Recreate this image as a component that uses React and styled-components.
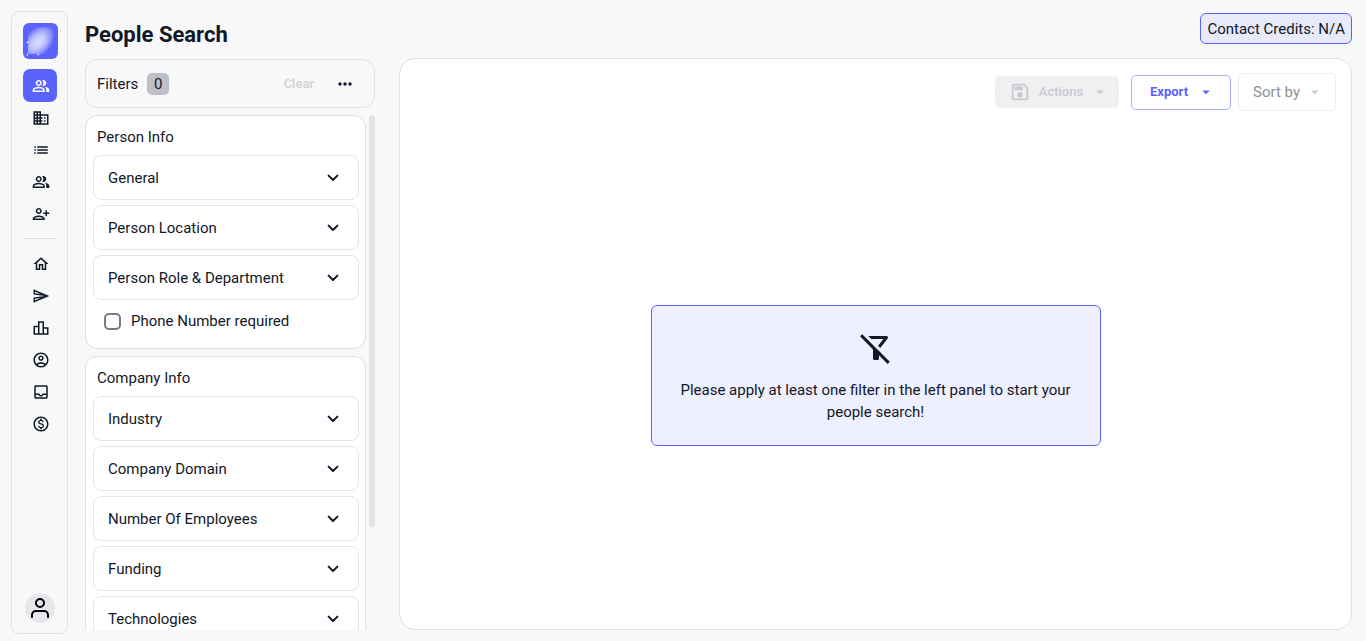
import React, { useState } from "react";
import styled, { createGlobalStyle, ThemeProvider } from "styled-components";
import {
  MdOutlinePeopleAlt,
  MdOutlineBusiness,
  MdList,
  MdOutlinePersonAddAlt1,
  MdOutlineHome,
  MdOutlineSend,
  MdOutlineLeaderboard,
  MdOutlineAccountCircle,
  MdOutlineInbox,
  MdOutlineMonetizationOn,
  MdOutlineSave,
  MdArrowDropDown,
  MdMoreHoriz,
  MdOutlineFilterAltOff,
} from "react-icons/md";
import { FiUser } from "react-icons/fi";

const theme = {
  primary: "#5b63ff",
  text: "#111827",
  page: "#f8f8f8",
  border: "#e0e0e2",
};

const mainLinks = [
  { label: "People", icon: MdOutlinePeopleAlt, active: true },
  { label: "Companies", icon: MdOutlineBusiness },
  { label: "Lists", icon: MdList },
  { label: "Contacts", icon: MdOutlinePeopleAlt },
  { label: "Add person", icon: MdOutlinePersonAddAlt1 },
];

const moreLinks = [
  { label: "Home", icon: MdOutlineHome },
  { label: "Campaigns", icon: MdOutlineSend },
  { label: "Analytics", icon: MdOutlineLeaderboard },
  { label: "Account", icon: MdOutlineAccountCircle },
  { label: "Inbox", icon: MdOutlineInbox },
  { label: "Billing", icon: MdOutlineMonetizationOn },
];

const personFilters = ["General", "Person Location", "Person Role & Department"];
const companyFilters = ["Industry", "Company Domain", "Number Of Employees", "Funding", "Technologies"];

const Chevron = () => (
  <svg width="12" height="8" viewBox="0 0 12 8" fill="none" aria-hidden="true">
    <path d="M1.6 1.6L6 6l4.400-4.400" stroke="currentColor" strokeWidth="2" strokeLinecap="round" strokeLinejoin="round" />
  </svg>
);

const Logo = () => (
  <svg width="35" height="36" viewBox="0 0 35 36" aria-hidden="true">
    <defs>
      <radialGradient
        id="glow"
        gradientUnits="userSpaceOnUse"
        cx="0"
        cy="0"
        r="1"
        gradientTransform="translate(15 19) rotate(-48) scale(20 13)"
      >
        <stop offset="0" stopColor="#dcdcfa" />
        <stop offset="0.4" stopColor="#c6c8fb" />
        <stop offset="0.750" stopColor="#9297fd" />
        <stop offset="1" stopColor="#5b63ff" />
      </radialGradient>
    </defs>
    <rect width="35" height="36" rx="6" fill="#5b63ff" />
    <rect x="5" y="4" width="26" height="27" fill="url(#glow)" />
    <path d="M3 20l2-2v2zM3 33l2-3v2zM14 33l1-2h2z" fill="#fff" />
  </svg>
);

const NavLinks = ({ links }) => (
  <NavList>
    {links.map(({ label, icon: Icon, active }) => (
      <li key={label}>
        <NavLink href="#" aria-label={label} $active={active}>
          <Icon size={18} />
        </NavLink>
      </li>
    ))}
  </NavList>
);

const FilterGroup = ({ title, filters, children }) => (
  <Card>
    <CardTitle>{title}</CardTitle>
    <FilterList>
      {filters.map(name => (
        <FilterButton type="button" key={name}>
          {name}
          <Chevron />
        </FilterButton>
      ))}
    </FilterList>
    {children}
  </Card>
);

const App = () => {
  const [phoneRequired, setPhoneRequired] = useState(false);

  return (
    <ThemeProvider theme={theme}>
      <GlobalStyle />
      <Page>
        <Sidebar>
          <LogoLink href="#" aria-label="Start">
            <Logo />
          </LogoLink>
          <NavLinks links={mainLinks} />
          <Divider />
          <NavLinks links={moreLinks} />
          <Avatar type="button" aria-label="Profile">
            <FiUser size={24} />
          </Avatar>
        </Sidebar>
        <Content>
          <Header>
            <Title>People Search</Title>
            <Credits>Contact Credits: N/A</Credits>
          </Header>
          <Columns>
            <FilterPanel>
              <FilterBar>
                <span>Filters</span>
                <Count>0</Count>
                <ClearButton type="button" disabled>Clear</ClearButton>
                <MoreButton type="button" aria-label="More">
                  <MdMoreHoriz size={20} />
                </MoreButton>
              </FilterBar>
              <ScrollArea>
                <Groups>
                  <FilterGroup title="Person Info" filters={personFilters}>
                    <CheckRow>
                      <Checkbox
                        type="checkbox"
                        checked={phoneRequired}
                        onChange={e => setPhoneRequired(e.target.checked)}
                      />
                      Phone Number required
                    </CheckRow>
                  </FilterGroup>
                  <FilterGroup title="Company Info" filters={companyFilters} />
                </Groups>
                <ScrollThumb />
              </ScrollArea>
            </FilterPanel>
            <Results>
              <Toolbar>
                <ActionsButton type="button" disabled>
                  <MdOutlineSave size={22} />
                  Actions
                  <MdArrowDropDown size={18} />
                </ActionsButton>
                <ExportButton type="button">
                  Export
                  <MdArrowDropDown size={18} />
                </ExportButton>
                <SortButton type="button" disabled>
                  Sort by
                  <MdArrowDropDown size={18} />
                </SortButton>
              </Toolbar>
              <EmptyArea>
                <EmptyBox>
                  <MdOutlineFilterAltOff size={36} />
                  <p>Please apply at least one filter in the left panel to start your people search!</p>
                </EmptyBox>
              </EmptyArea>
            </Results>
          </Columns>
        </Content>
      </Page>
    </ThemeProvider>
  );
};

export default App;

const GlobalStyle = createGlobalStyle`
  * {
    box-sizing: border-box;
  }
  body {
    margin: 0;
    background: ${theme.page};
    color: ${theme.text};
    font-family: Roboto, sans-serif;
    font-size: 15px;
    line-height: 22px;
  }
  button {
    font: inherit;
    color: inherit;
    padding: 0;
    border: none;
    background: none;
    cursor: pointer;
    &:disabled {
      cursor: default;
    }
  }
  svg {
    display: block;
    flex-shrink: 0;
  }
`;

const Page = styled.div`
  display: flex;
  height: 100vh;
  padding: 11px 14px 7px 11px;
`;

const Sidebar = styled.nav`
  display: flex;
  flex-direction: column;
  align-items: center;
  width: 57px;
  flex-shrink: 0;
  padding: 11px 10px 10px 11px;
  border: 1px solid ${({ theme }) => theme.border};
  border-radius: 8px;
`;

const LogoLink = styled.a`
  margin-bottom: 10px;
`;

const NavList = styled.ul`
  margin: 0;
  padding: 0;
  list-style: none;
`;

const NavLink = styled.a`
  display: flex;
  align-items: center;
  justify-content: center;
  width: 34px;
  height: ${({ $active }) => ($active ? "33px" : "32px")};
  padding-left: 2px;
  border-radius: 7px;
  color: ${({ $active, theme }) => ($active ? "#fff" : theme.text)};
  background: ${({ $active, theme }) => ($active ? theme.primary : "transparent")};
`;

const Divider = styled.hr`
  width: 34px;
  margin: 8px 0 9px;
  border: none;
  border-top: 1px solid ${({ theme }) => theme.border};
`;

const Avatar = styled.button`
  display: flex;
  align-items: center;
  justify-content: center;
  width: 30px;
  height: 30px;
  margin-top: auto;
  border-radius: 50%;
  background: #e5e7eb;
  box-shadow: 0 0 0 2px #fafafa;
  color: #000;
`;

const Content = styled.div`
  display: flex;
  flex-direction: column;
  flex: 1;
  min-width: 0;
  padding: 2px 0 4px 17px;
`;

const Header = styled.header`
  display: flex;
  align-items: flex-start;
  justify-content: space-between;
  margin-bottom: 9px;
`;

const Title = styled.h1`
  margin: 8px 0 0;
  font-size: 22px;
  line-height: 28px;
  font-weight: 700;
`;

const Credits = styled.div`
  display: flex;
  align-items: center;
  height: 31px;
  padding: 0 6px;
  border: 1px solid ${({ theme }) => theme.primary};
  border-radius: 6px;
  background: #e8e9fb;
`;

const Columns = styled.div`
  display: flex;
  flex: 1;
  gap: 24px;
  min-height: 0;
`;

const FilterPanel = styled.aside`
  display: flex;
  flex-direction: column;
  gap: 7px;
  width: 290px;
  flex-shrink: 0;
  padding-top: 1px;
`;

const FilterBar = styled.div`
  display: flex;
  align-items: center;
  height: 49px;
  flex-shrink: 0;
  padding: 0 19px 0 11px;
  border: 1px solid ${({ theme }) => theme.border};
  border-radius: 12px;
`;

const Count = styled.span`
  width: 22px;
  margin-left: 9px;
  border-radius: 5px;
  background: #bdc1c7;
  text-align: center;
`;

const ClearButton = styled.button`
  margin-left: auto;
  color: #d0d2d5;
  font-size: 13px;
  font-weight: 500;
`;

const MoreButton = styled.button`
  margin-left: 21px;
`;

const ScrollArea = styled.div`
  display: flex;
  flex: 1;
  gap: 3px;
  min-height: 0;
`;

const Groups = styled.div`
  display: flex;
  flex-direction: column;
  flex: 1;
  gap: 7px;
  overflow-y: auto;
  scrollbar-width: none;
`;

const ScrollThumb = styled.div`
  width: 6px;
  height: 80%;
  border-radius: 3px;
  background: #e3e3e3;
`;

const Card = styled.section`
  flex-shrink: 0;
  padding: 10px 6px 7px 7px;
  border: 1px solid ${({ theme }) => theme.border};
  border-radius: 12px;
  background: #fff;
`;

const CardTitle = styled.h2`
  margin: 0 4px 7px;
  font-size: 15px;
  font-weight: 400;
`;

const FilterList = styled.div`
  display: flex;
  flex-direction: column;
  gap: 5px;
`;

const FilterButton = styled.button`
  display: flex;
  align-items: center;
  justify-content: space-between;
  height: 45px;
  padding: 0 19px 0 14px;
  border: 1px solid #e5e5e7;
  border-radius: 8px;
  text-align: left;
`;

const CheckRow = styled.label`
  display: flex;
  align-items: center;
  gap: 10px;
  margin: 10px 11px 9px;
`;

const Checkbox = styled.input`
  appearance: none;
  width: 17px;
  height: 17px;
  margin: 0;
  border: 2px solid #777b88;
  border-radius: 5px;
  background: #fff;
  &:checked {
    background: ${({ theme }) => theme.primary};
  }
`;

const Results = styled.main`
  display: flex;
  flex-direction: column;
  flex: 1;
  min-width: 0;
  padding: 14px 15px;
  border: 1px solid ${({ theme }) => theme.border};
  border-radius: 16px;
  background: #fff;
`;

const Toolbar = styled.div`
  display: flex;
  align-items: center;
  justify-content: flex-end;
`;

const ToolButton = styled.button`
  display: flex;
  align-items: center;
  justify-content: space-between;
  border-radius: 5px;
`;

const ActionsButton = styled(ToolButton)`
  width: 124px;
  height: 32px;
  padding: 0 10px 0 14px;
  margin-right: 12px;
  background: #eff0f2;
  color: #c8cacd;
  font-size: 13px;
  font-weight: 500;
`;

const ExportButton = styled(ToolButton)`
  width: 100px;
  height: 35px;
  padding: 0 15px 0 18px;
  margin-right: 7px;
  border: 1px solid #a9adff;
  color: ${({ theme }) => theme.primary};
  font-size: 13px;
  font-weight: 700;
`;

const SortButton = styled(ToolButton)`
  width: 98px;
  height: 38px;
  padding: 0 11px 0 14px;
  border: 1px solid #ededee;
  color: #8f9196;
  svg {
    color: #c8cacd;
  }
`;

const EmptyArea = styled.div`
  display: flex;
  flex: 1;
  align-items: center;
  justify-content: center;
  padding-top: 24px;
`;

const EmptyBox = styled.div`
  display: flex;
  flex-direction: column;
  align-items: center;
  width: 450px;
  max-width: 100%;
  padding: 24px 26px 22px;
  border: 1px solid ${({ theme }) => theme.primary};
  border-radius: 6px;
  background: #eeefff;
  text-align: center;
  p {
    margin: 13px 0 0;
  }
`;
